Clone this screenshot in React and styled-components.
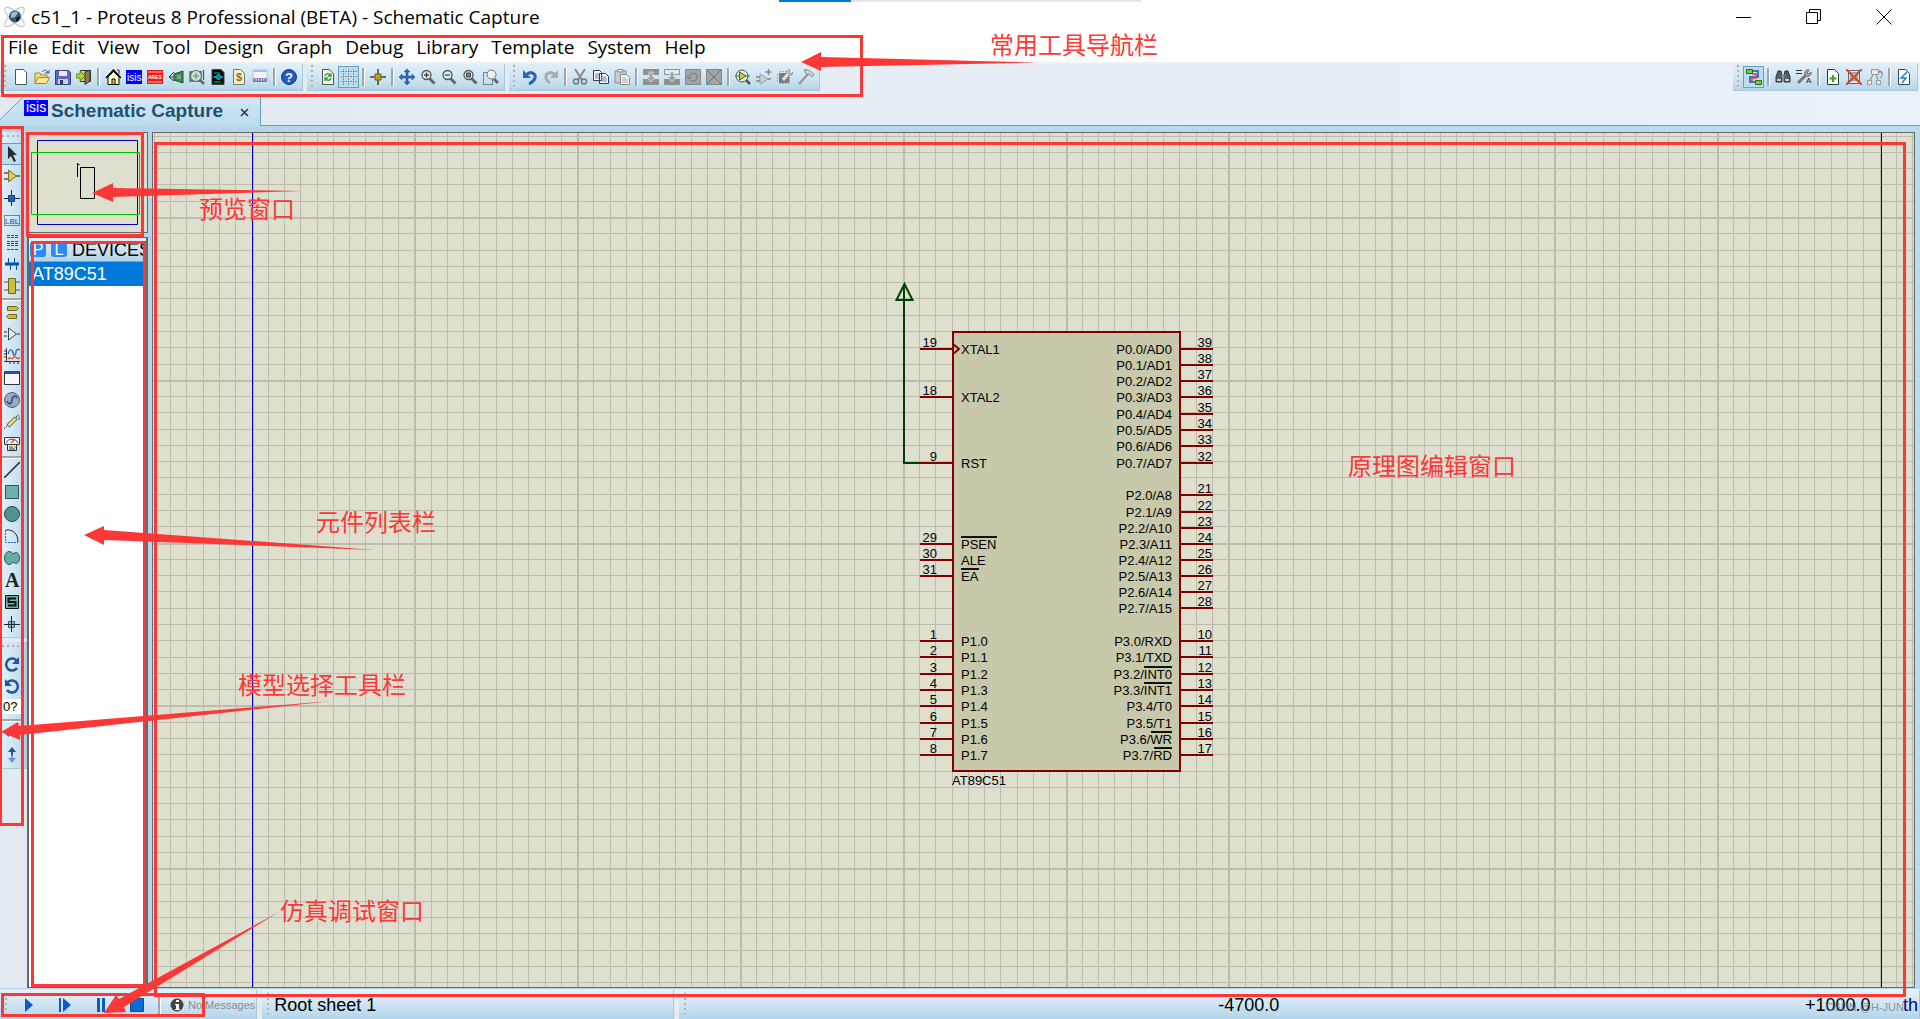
import { useState } from "react";
import styled, { createGlobalStyle } from "styled-components";

const GlobalStyle = createGlobalStyle`
  * {
    box-sizing: border-box;
  }
  body {
    margin: 0;
    background: #e2e9f0;
    font-family: "Liberation Sans", Arial, sans-serif;
    color: #000;
  }
  button {
    margin: 0;
    padding: 0;
    border: none;
    background: none;
    font: inherit;
    color: inherit;
  }
`;

const Window = styled.div`
  position: relative;
  display: flex;
  flex-direction: column;
  min-height: 100vh;
  overflow: hidden;
  background: linear-gradient(to right, #e2e9f0, #eaf1f9);
`;

/* title bar */

const TitleBar = styled.header`
  position: relative;
  display: flex;
  align-items: center;
  height: 35px;
  padding: 0 21px 2px 3px;
  background: #fff;
  h1 {
    flex: 1;
    margin: 0 0 0 5px;
    font: 400 19px/24px "Open Sans", "Noto Sans", sans-serif;
  }
`;

const Progress = styled.div`
  position: absolute;
  top: 0;
  left: 779px;
  width: 362px;
  height: 2px;
  background: linear-gradient(to right, #0078d7 72px, #e5e5e5 72px);
`;

const WindowButton = styled.button`
  display: flex;
  align-items: center;
  justify-content: center;
  width: 30px;
  height: 30px;
  margin-left: 40px;
`;

const MenuBar = styled.nav`
  display: flex;
  gap: 13px;
  height: 29px;
  padding: 0 8px 3px;
  background: #fff;
  border-bottom: 2px solid #f0f0f0;
  button {
    font: 400 19px/24px "Open Sans", "Noto Sans", sans-serif;
  }
`;

/* toolbars */

const ToolRow = styled.div`
  display: flex;
  gap: 4px;
  height: 27px;
  padding-right: 2px;
`;

const Toolbar = styled.div`
  display: flex;
  align-items: center;
  padding: 0 3px 1px 4px;
  margin-left: ${(props) => (props.$end ? "auto" : "0")};
  background: linear-gradient(#e0eff8, #cfe5f3 50%, #b9d8ea 90%, #a5c6da);
  border-right: 1px solid #a9c8da;
`;

const Grip = styled.span`
  flex: none;
  width: ${(props) => (props.$flat ? "100%" : "6px")};
  height: ${(props) => (props.$flat ? "11px" : "26px")};
  background-image: radial-gradient(circle at 2px 2px, #aab4bb 1px, #fff 2px, transparent 2px);
  background-size: ${(props) => (props.$flat ? "5px 11px" : "6px 5px")};
  background-position: ${(props) => (props.$flat ? "0 2px" : "-1px 0")};
`;

const Divider = styled.span`
  flex: none;
  width: ${(props) => (props.$flat ? "21px" : "2px")};
  height: ${(props) => (props.$flat ? "2px" : "18px")};
  margin: ${(props) => (props.$flat ? "1px 0" : "0 3px")};
  background: #a5a5a5;
  box-shadow: ${(props) => (props.$flat ? "0 1px #fff" : "1px 0 #fff")};
`;

const ToolButton = styled.button`
  flex: none;
  display: flex;
  align-items: center;
  justify-content: center;
  width: 21px;
  height: 22px;
  background: ${(props) => (props.$active ? "#bcdcf0" : "none")};
  box-shadow: ${(props) => (props.$active ? "inset 0 0 0 1px #6a9fbb" : "none")};
`;

/* tab strip */

const TabStrip = styled.div`
  display: flex;
  height: 35px;
  padding-top: 6px;
  border-bottom: 1px solid #6a9fbb;
`;

const Tab = styled.div`
  display: flex;
  height: 29px;
  margin-bottom: -1px;
  background: linear-gradient(#d2e7f5, #bbdcee);
  border-right: 1px solid #6a9fbb;
  color: #24506f;
  font: 700 19px/25px "Liberation Sans", Arial, sans-serif;
  svg {
    flex: none;
  }
  span {
    margin: 1px 15px 0 3px;
  }
  .logo {
    margin-top: 3px;
  }
  .close {
    display: flex;
    align-items: center;
    margin-right: 9px;
    padding: 1px 2px 0;
  }
`;

/* work area */

const Work = styled.main`
  flex: 1;
  display: flex;
  min-height: 600px;
  padding: 6px 5px 1px 0;
  background: linear-gradient(to right, #b5d4e8, #bbdcee);
`;

const Rail = styled.aside`
  flex: none;
  width: 27px;
  padding-left: 1px;
  background: #e2e9f0;
`;

const RailGroup = styled.div`
  display: flex;
  flex-direction: column;
  padding: 0 2px 2px 0;
  margin-bottom: 4px;
  background: linear-gradient(to right, #e2f1fa, #c6e0f0 70%, #a9cbe0);
  border-bottom: 1px solid #a9c8da;
`;

const AngleInput = styled.input`
  width: 23px;
  height: 15px;
  margin: 2px 0 4px;
  padding: 0 0 0 2px;
  border: none;
  font: 400 13px/15px "Liberation Sans", Arial, sans-serif;
`;

const Side = styled.section`
  flex: none;
  display: flex;
  flex-direction: column;
  gap: 4px;
  width: 121px;
  margin-right: 4px;
`;

const Preview = styled.div`
  height: 101px;
  background: #dedfcf;
  border: 1px solid #66696b;
  svg {
    display: block;
  }
`;

const Devices = styled.div`
  flex: 1;
  display: flex;
  flex-direction: column;
  overflow: hidden;
  background: #fff;
  border: 1px solid #66696b;
  border-width: 1px 2px 1px 2px;
`;

const DevicesHead = styled.div`
  display: flex;
  align-items: center;
  height: 24px;
  padding-left: 1px;
  border-bottom: 1px solid #8aa5b5;
  background: linear-gradient(#e2f1fa, #b5d4e8);
  font-size: 18px;
  h2 {
    margin: 2px 0 0;
    font: inherit;
  }
`;

const PickButton = styled.button`
  flex: none;
  width: 16px;
  height: 15px;
  margin-right: 5px;
  border-radius: 3px;
  background: #2a8cf0;
  color: #fff;
  font-size: 16px;
  line-height: 14px;
`;

const DeviceItem = styled.button`
  height: 24px;
  padding-left: 3px;
  background: ${(props) => (props.$selected ? "#0078d7" : "#fff")};
  color: ${(props) => (props.$selected ? "#fff" : "#000")};
  font-size: 18px;
  line-height: 24px;
  text-align: left;
`;

const Sheet = styled.div`
  flex: 1;
  position: relative;
  overflow: hidden;
  background: #dedfcf;
  border: 1px solid #66696b;
  > svg {
    position: absolute;
    top: 0;
    left: 0;
    width: 100%;
    height: 100%;
  }
  text {
    font: 400 13px "Liberation Sans", Arial, sans-serif;
  }
`;

/* status bar */

const StatusBar = styled.footer`
  display: flex;
  gap: 5px;
  height: 30px;
  padding-top: 1px;
`;

const StatusPart = styled.div`
  flex: ${(props) => props.$flex || "none"};
  display: flex;
  align-items: center;
  min-width: 0;
  padding: 0 0 0 5px;
  background: linear-gradient(#e6f2f9, #cfe5f3 50%, #b0d5ea);
  border-right: 1px solid #a9c8da;
  font-size: 18px;
  small {
    margin: 0 1px 0 3px;
    color: #858b90;
    font-size: 11px;
  }
`;

const SheetName = styled.span`
  width: 400px;
  padding: 2px 0 0 1px;
`;

const SimButton = styled.button`
  display: flex;
  align-items: center;
  justify-content: center;
  width: 36px;
  height: 26px;
`;

const InfoButton = styled(SimButton)`
  width: 16px;
  margin-left: 6px;
`;

const Coords = styled.div`
  flex: 1;
  display: grid;
  grid-template-columns: 9fr 10fr 98px 16px;
  padding-top: 2px;
  b {
    font-weight: 400;
    color: #000080;
  }
`;

const Watermark = styled.span`
  position: absolute;
  right: 16px;
  bottom: 6px;
  color: rgba(110, 120, 128, 0.75);
  font-size: 11px;
`;

/* red notes lying over the window */

const Frame = styled.div`
  position: absolute;
  left: ${(props) => props.$x}px;
  top: ${(props) => props.$y}px;
  width: ${(props) => props.$w}px;
  height: ${(props) => props.$h}px;
  border: 3px solid #fc3836;
  pointer-events: none;
`;

const SheetFrame = styled.div`
  position: absolute;
  inset: 142px 14px 22px 154px;
  border: 3px solid #fc3836;
  pointer-events: none;
`;

const Note = styled.span`
  position: absolute;
  left: ${(props) => props.$x}px;
  top: ${(props) => props.$y}px;
  color: #fc3836;
  font: 400 24px/26px "Noto Sans CJK SC", sans-serif;
  white-space: nowrap;
`;

const Arrows = styled.svg`
  position: absolute;
  top: 0;
  left: 0;
  pointer-events: none;
`;

const sheetShape = "M2.5 .5h7l4 4v11h-11z";

const lens = (inside) => (
  <>
    <path d="M9.5 9.5l5 5" stroke="#666" strokeWidth="3" />
    <circle cx="6.5" cy="6" r="4.5" fill="#dfe9ee" stroke="#555" strokeWidth="1.3" />
    {inside}
  </>
);

const icons = {
  new: <path d="M2.5 .5h8l3 3v12h-11z" fill="#fff" stroke="#555" />,
  open: (
    <>
      <path d="M1 14V4h5l1 2h6v3" fill="#f4dc7a" stroke="#a8862a" />
      <path d="M1 14.500l3-6h11.500l-3 6z" fill="#fbe88e" stroke="#a8862a" />
      <path d="M8 3c2-2.500 5-2.500 6 1m-3 0h4V1" fill="none" stroke="#3a5a78" />
    </>
  ),
  save: (
    <>
      <path d="M.5 1.500h13l2 2v12H.5z" fill="#6668b4" stroke="#3c3d88" />
      <path d="M4 2h8v5H4z" fill="#e9e9f6" />
      <path d="M3 10h10v5H3z" fill="#c3cfe3" />
      <path d="M5 11h3v4H5z" fill="#333a70" />
    </>
  ),
  exit: (
    <>
      <path d="M4.500 1.500h10v11h-10z" fill="#cfc8a0" stroke="#333" />
      <path d="M9 3l5-2v11l-5 3.500z" fill="#8c7d4a" stroke="#333" />
      <path d="M0 5h4V2l5 5-5 5V9H0z" fill="#b6d530" stroke="#55701a" strokeWidth=".8" />
    </>
  ),
  home: (
    <>
      <path d="M3 8v7.500h11V8L8.500 2.500z" fill="#ffffc8" stroke="#000" />
      <path d="M1 9l7.500-8L16 9" fill="none" stroke="#000" strokeWidth="1.500" />
      <path d="M12 1h2v4" stroke="#900" fill="none" />
      <path d="M7 15v-5h3v5" fill="#f2d038" stroke="#000" />
    </>
  ),
  isis: (
    <>
      <path d="M0 1h16v14H0z" fill="#00f" />
      <text x="1" y="12" fontSize="10" fill="#fff">isis</text>
    </>
  ),
  ares: (
    <>
      <path d="M0 1h16v14H0z" fill="#f01818" />
      <path d="M1 3h14M1 13h14" stroke="#fff" strokeWidth=".7" />
      <text x="1" y="10" fontSize="5" fontWeight="700" fill="#fff">ARES</text>
    </>
  ),
  view3d: (
    <>
      <path d="M6 5l9-3v12l-9-3z" fill="#3f8a55" stroke="#17532d" />
      <path d="M9 6h4v4H9z" fill="#8a9a8f" />
      <path d="M6 3L1 8l5 4M1 8h5" fill="none" stroke="#333" />
    </>
  ),
  gerber: (
    <>
      <path d="M1 3h10v9H1zM14.500 1v10M12 2v3" fill="none" stroke="#1f7c45" strokeWidth="1.300" />
      <circle cx="7" cy="7" r="5.500" fill="#cfe0d4" stroke="#666" strokeWidth="1.200" />
      <path d="M4 7h6M7 4v6" stroke="#4f8f68" />
      <path d="M11 11l4 4" stroke="#666" strokeWidth="2.500" />
    </>
  ),
  explorer: (
    <>
      <path d="M2 .5h9l3 3v12H2z" fill="#000" stroke="#444" />
      <path d="M4 4h6M4 13h7" stroke="#00d26a" />
      <path d="M8.500 5l3 3-3 3-3-3zM3 8h3M11 8h2" fill="#007a8c" stroke="#00e5ff" />
    </>
  ),
  bom: (
    <>
      <path d={sheetShape} fill="#f1eed8" stroke="#777" />
      <text x="5" y="12" fontSize="11" fontWeight="700" fill="#8a7416">$</text>
    </>
  ),
  source: (
    <>
      <path d="M1 1h14v11H1z" fill="#f2f5fa" stroke="#b6c2cf" />
      <path d="M1 1h14v2H1z" fill="#a7bfd9" />
      <text x="1" y="13" fontSize="5" fontWeight="700" fill="#26379a">01010</text>
    </>
  ),
  help: (
    <>
      <circle cx="8" cy="8" r="7.500" fill="#2459bd" stroke="#173b82" />
      <text x="4" y="13" fontSize="13" fontWeight="700" fill="#fff">?</text>
    </>
  ),
  refresh: (
    <>
      <path d={sheetShape} fill="#eef5ea" stroke="#555" />
      <path d="M5 7c1-3 4-3 5-1m1-2v3H8M11 9c-1 3-4 3-5 1m-1 2V9h3" fill="none" stroke="#2a9a2a" strokeWidth="1.300" />
    </>
  ),
  grid: (
    <path
      d="M0 2.500h16M0 7.500h16M0 12.500h16M2.500 0v16M7.500 0v16M12.500 0v16"
      stroke="#3b4650"
      strokeDasharray="1 1.500"
      strokeDashoffset=".5"
    />
  ),
  origin: (
    <>
      <path d="M8 0v16M0 8h16" stroke="#444" strokeWidth="1.500" />
      <path d="M5 5h6v6H5z" fill="#b9a61c" stroke="#6a5f10" />
    </>
  ),
  pan: <path d="M8 0l3 3H9v4h4V5l3 3-3 3V9H9v4h2l-3 3-3-3h2V9H3v2L0 8l3-3v2h4V3H5z" fill="#2e6bb8" stroke="#17437e" strokeWidth=".5" />,
  zoomIn: lens(<path d="M4 6h5M6.500 3.500v5" stroke="#444" strokeWidth="1.300" />),
  zoomOut: lens(<path d="M4 6h5" stroke="#3a6ca8" strokeWidth="1.500" />),
  zoomAll: lens(<path d="M4.500 4h4v4h-4z" fill="#6c8a6c" stroke="#444" />),
  zoomArea: (
    <>
      <path d="M.5 3.500h9v12h-9z" fill="none" stroke="#222" strokeDasharray="1 1" />
      <path d="M11 10l4 4" stroke="#666" strokeWidth="3" />
      <circle cx="8.500" cy="5.500" r="4.500" fill="#e9f1f6" stroke="#777" />
    </>
  ),
  undo: (
    <>
      <path d="M4 6c5-5 10-1 9 3-1 3-4 5-6 6" fill="none" stroke="#2668b8" strokeWidth="3" />
      <path d="M1 1v8h8z" fill="#2668b8" />
    </>
  ),
  redo: (
    <>
      <path d="M12 6C7 1 2 5 3 9c1 3 2 4 4 5" fill="none" stroke="#a5adb2" strokeWidth="3" />
      <path d="M15 1v8H7z" fill="#a5adb2" />
    </>
  ),
  cut: (
    <>
      <path d="M3 0l7 11M13 0L6 11" stroke="#8b8b8b" strokeWidth="2" />
      <circle cx="4" cy="12.500" r="2.500" fill="none" stroke="#777" strokeWidth="1.500" />
      <circle cx="12" cy="12.500" r="2.500" fill="none" stroke="#777" strokeWidth="1.500" />
    </>
  ),
  copy: (
    <>
      <path d="M.5 1.500h6l2 2v8h-8zM6.500 4.500h6l3 3v7h-9z" fill="#fff" stroke="#2f3f5c" />
      <path d="M2 5h4M2 7h4M2 9h4M8 8h5M8 10h6M8 12h6" stroke="#6b7c99" />
    </>
  ),
  paste: (
    <>
      <path d="M1 2h11v12H1z" fill="#c8cdd0" stroke="#8a8f92" />
      <path d="M4 .5h5V3H4z" fill="#eee" stroke="#888" />
      <path d="M6.500 5.500h6l3 3v7h-9z" fill="#f4f4f4" stroke="#888" />
      <path d="M8 9h4M8 11h6M8 13h6" stroke="#aaa" />
    </>
  ),
  blockCopy: (
    <>
      <path d="M0 0h16v6H0zM0 10h16v6H0z" fill="#919191" />
      <path d="M6 3h4v5h3l-5 5-5-5h3z" fill="#a5a5a5" stroke="#eee" strokeWidth=".7" />
    </>
  ),
  blockMove: (
    <>
      <path d="M.5 .5h15v5H.5z" fill="#e3edf2" stroke="#919191" />
      <path d="M0 10h16v6H0z" fill="#919191" />
      <path d="M6 3h4v5h3l-5 5-5-5h3z" fill="#a2a2a2" stroke="#eee" strokeWidth=".7" />
    </>
  ),
  blockRotate: (
    <>
      <path d="M.5 .5h15v15H.5z" fill="#a2a4a5" stroke="#888" />
      <path d="M4 8c1-5 8-5 8 0s-6 5-7 3M2 7l2 3 3-2" fill="none" stroke="#777" />
    </>
  ),
  blockDelete: (
    <>
      <path d="M.5 .5h15v15H.5z" fill="#a2a4a5" stroke="#888" />
      <path d="M1 1l14 14M15 1L1 15" stroke="#6f6f6f" />
    </>
  ),
  pick: (
    <>
      <path d="M10 10l5 5" stroke="#555" strokeWidth="2.500" />
      <circle cx="7" cy="7" r="6" fill="#e2ecd9" stroke="#555" />
      <path d="M4.500 3l6.500 4-6.500 4z" fill="#c9cb4a" stroke="#555" />
      <path d="M0 7h4M11 7h4" stroke="#285" />
    </>
  ),
  make: (
    <>
      <path d="M4 5l8 5-8 5z" fill="#d0d0d0" stroke="#999" />
      <path d="M0 8h4M0 12h4M12 10h3M12.500 0v6M9.500 3h6" stroke="#858585" strokeWidth="1.300" />
    </>
  ),
  packaging: (
    <>
      <path d="M2 4h10v10H2z" fill="#808080" />
      <path d="M3 2v14M6 2v14M9 2v14M12 8v8M0 6h14M0 9h14M0 12h14" stroke="#777" strokeDasharray="1 1" />
      <path d="M6 11l5-6" stroke="#e3e3e3" strokeWidth="3" />
      <path d="M10 5c-1-3 1-5 3-4l-1 3 2 1 2-2c0 3-3 4-5 3" fill="#d9d9d9" stroke="#777" strokeWidth=".7" />
    </>
  ),
  hammer: (
    <>
      <path d="M1 15L10 5" stroke="#999" strokeWidth="2.500" />
      <path d="M6 1c4-1 7 1 10 5l-2 2-3-3-2 1z" fill="#d2d2d2" stroke="#888" />
    </>
  ),
  autoroute: (
    <>
      <path d="M7 2h5v6H4v5h5" fill="none" stroke="#1f4fc0" strokeWidth="1.500" />
      <path d="M6 5h4v4H6v4" stroke="#dc4a26" strokeWidth="1.500" fill="none" />
      <path d="M.5 .5h6v4h-6zM9.500 11.500h6v4h-6z" fill="#6fce3c" stroke="#2a6a12" />
    </>
  ),
  search: (
    <>
      <path d="M3 2h3l1 5v6H1V8zM10 2h3l2 6v5H9V7z" fill="#555f68" stroke="#333" />
      <path d="M6.500 5h3v4h-3z" fill="#89939b" />
      <path d="M2 10h4v2H2zM10 10h4v2h-4z" fill="#c4cbd0" />
    </>
  ),
  property: (
    <>
      <path d="M0 1.500h6M0 4.500h6" stroke="#333" />
      <path d="M2 14l8-8" stroke="#777" strokeWidth="3" />
      <path d="M9 6c-1-3 1-6 4-5l-2 3 2 1 2-2c1 3-2 5-5 4" fill="#aaa" stroke="#555" strokeWidth=".8" />
      <text x="10" y="14" fontSize="8" fill="#111">A</text>
    </>
  ),
  newSheet: (
    <>
      <path d={sheetShape} fill="#fff" stroke="#333" />
      <path d="M8 6v7M4.500 9.500h7" stroke="#38a818" strokeWidth="2.200" />
    </>
  ),
  removeSheet: (
    <>
      <path d="M2.500 1.500h11v13h-11zM5 4h6v7H5z" fill="#e5e5e5" stroke="#666" />
      <path d="M0 0l16 16M16 0L0 16" stroke="#d9452b" strokeWidth="2" />
    </>
  ),
  goto: (
    <>
      <path d="M4.500 .5h7v5h-7zM.5 11.500h4v4h-4zM9.500 11.500h4v4h-4z" fill="#e9e9e9" stroke="#999" />
      <path d="M6 6l-3 5M9 6l2 5M12 2c4 1 4 6 1 7m-2-4l2-3 3 2" fill="none" stroke="#999" strokeWidth="1.300" />
    </>
  ),
  erc: (
    <>
      <path d={sheetShape} fill="#fff" stroke="#444" />
      <path d="M11 3L5 9h5l-4 5" fill="none" stroke="#1b86e0" strokeWidth="1.500" />
    </>
  ),
  select: <path d="M4 0v13l3-3 3 6 2-1-3-6h4z" fill="#2b2b2b" />,
  component: (
    <>
      <path d="M0 5h5M0 11h5M12 8h4" stroke="#555" strokeWidth="1.300" />
      <path d="M4.500 2l8 6-8 6z" fill="#d9cf5c" stroke="#7c7220" />
    </>
  ),
  junction: (
    <>
      <path d="M7.500 0v16M0 8.500h16" stroke="#222" />
      <path d="M4.500 5.500h6v6h-6z" fill="#1b62c4" stroke="#123f80" />
    </>
  ),
  label: (
    <>
      <path d="M.5 3.500h15v10H.5z" fill="none" stroke="#222" strokeDasharray="1 1" />
      <text x="1" y="12" fontSize="8" fill="#0a45a8">LBL</text>
    </>
  ),
  script: <path d="M3 1.500h11M3 3.500h11M3 7.500h11M3 9.500h11M3 11.500h11M3 15.500h11" stroke="#444" strokeDasharray="3 1" />,
  bus: (
    <>
      <path d="M1 8h14" stroke="#0c4fb0" strokeWidth="3" />
      <path d="M4.500 2v6M10.500 2v6M6.500 8v6M12.500 8v6" stroke="#0c4fb0" />
    </>
  ),
  subcircuit: (
    <>
      <path d="M0 4h4M0 12h4M12 4h4M12 12h4" stroke="#555" />
      <path d="M4.500 .5h7v15h-7z" fill="#cdbf36" stroke="#6f661c" />
    </>
  ),
  terminal: <path d="M3.500 2.500h9l2 2-2 2h-9zM12.500 10.500h-8l-2 2 2 2h8z" fill="#cdbf36" stroke="#6f661c" />,
  pin: (
    <>
      <path d="M4.500 2l8 6-8 6z" fill="#e3eef5" stroke="#444" />
      <path d="M0 6h3M0 10h3M13 8h3" stroke="#2a7f8c" strokeWidth="1.300" />
    </>
  ),
  graph: (
    <>
      <path d="M2.500 0v14M0 13.500h16M0 3h2M0 6h2M0 9h2M6 14v2M10 14v2M14 14v2" stroke="#333" />
      <path d="M4 6c2-6 4-5 5-1s3 2 3-1 2-3 4-2" fill="none" stroke="#1b5cc4" strokeWidth="1.200" />
      <path d="M4 11c2-3 4 1 5-1s3-1 4 0 2 1 3-1" fill="none" stroke="#dc4a26" strokeWidth="1.200" />
    </>
  ),
  tape: (
    <>
      <path d="M.5 1.500h15v13H.5z" fill="#f6f8fb" stroke="#333" />
      <path d="M1 1h14v3H1z" fill="#1b4fc0" />
    </>
  ),
  generator: (
    <>
      <circle cx="8" cy="8" r="7.500" fill="#a2a9b6" stroke="#585e69" />
      <path d="M3 9c2 5 5 2 5-1s3-6 5-2" fill="none" stroke="#1b4fb0" strokeWidth="1.700" />
    </>
  ),
  probe: (
    <>
      <path d="M0 15l4-4M12 4c1-5 4-2 3 2" fill="none" stroke="#333" strokeDasharray="2 1" />
      <path d="M4 12l8-8" stroke="#555" strokeWidth="4" />
      <path d="M4.500 11.500l7-7" stroke="#ebe07a" strokeWidth="2.500" />
    </>
  ),
  instrument: (
    <>
      <path d="M.5 1.500h15v7H.5zM3.500 8.500h9v6h-9z" fill="#f3f3f3" stroke="#333" />
      <path d="M2 7c2-5 10-5 12 0" fill="none" stroke="#1b4fb0" />
      <path d="M7 7l4-4" stroke="#dc4a26" strokeWidth="1.300" />
      <path d="M5 11h4M5 13h6" stroke="#333" />
      <path d="M10 10h2v2h-2z" fill="#d6c62c" />
    </>
  ),
  line: <path d="M0 16L16 0" stroke="#222" strokeWidth="1.500" />,
  box: <path d="M1.500 1.500h13v13h-13z" fill="#6db0aa" stroke="#2a5c5a" />,
  circle: <circle cx="8" cy="8" r="7.500" fill="#4f938e" stroke="#2a4a4a" />,
  arc: (
    <>
      <path d="M1.500 2v12.500H14" fill="none" stroke="#1b62c4" strokeDasharray="2 1" />
      <path d="M2 2c7-1 12 4 12 12" fill="none" stroke="#222" />
    </>
  ),
  path: <path d="M9 4C6-1 .5 2 .5 8S6 17 9 12c3 3 6.500 1 6.500-4S12 1 9 4z" fill="#67aaa3" stroke="#2a5c5a" />,
  text: <text x="1" y="15" fontSize="20" fontWeight="700" fontFamily="Liberation Serif" fill="#222">A</text>,
  symbol: (
    <>
      <path d="M1.500 1.500h13v13h-13z" fill="#6db0aa" stroke="#111" />
      <path d="M12 4.500H4.500v3.500h7v3.500H4" fill="none" stroke="#111" strokeWidth="2" />
    </>
  ),
  marker: (
    <>
      <path d="M4.500 5.500h6v6h-6z" fill="#8fc4bf" stroke="#2a5c5a" />
      <path d="M7.500 0v16M0 8.500h16" stroke="#222" />
    </>
  ),
  rotateCw: (
    <>
      <path d="M13 5a6 6 0 1 0 0 7" fill="none" stroke="#24529f" strokeWidth="2.500" />
      <path d="M15 1v7H8z" fill="#24529f" />
    </>
  ),
  rotateCcw: (
    <>
      <path d="M3 5a6 6 0 1 1 0 7" fill="none" stroke="#24529f" strokeWidth="2.500" />
      <path d="M1 1v7h7z" fill="#24529f" />
    </>
  ),
  flipX: (
    <>
      <path d="M8 7H5V4L0 8l5 4V9h3z" fill="#24529f" />
      <path d="M8 7h3V4l5 4-5 4V9H8z" fill="#6f90d6" />
    </>
  ),
  flipY: (
    <>
      <path d="M7 8V5H4l4-5 4 5H9v3z" fill="#24529f" />
      <path d="M7 8v3H4l4 5 4-5H9V8z" fill="#6f90d6" />
    </>
  ),
};

const Icon = ({ name }) => (
  <svg width="16" height="16" viewBox="0 0 16 16" aria-hidden="true">
    {icons[name]}
  </svg>
);

// "|" stands for a divider
const fileTools = ["new", "open", "save", "exit", "|", "home", "isis", "ares", "view3d", "gerber", "explorer", "bom", "source", "|", "help"];
const viewTools = ["refresh", "grid", "|", "origin", "|", "pan", "zoomIn", "zoomOut", "zoomAll", "zoomArea"];
const editTools = ["undo", "redo", "|", "cut", "copy", "paste", "|", "blockCopy", "blockMove", "blockRotate", "blockDelete", "|", "pick", "make", "packaging", "hammer"];
const designTools = ["autoroute", "|", "search", "property", "|", "newSheet", "removeSheet", "goto", "|", "erc"];
const modeTools = [
  "select", "component", "junction", "label", "script", "bus", "subcircuit", "|",
  "terminal", "pin", "graph", "tape", "generator", "probe", "instrument", "|",
  "line", "box", "circle", "arc", "path", "text", "symbol", "marker",
];
const menus = ["File", "Edit", "View", "Tool", "Design", "Graph", "Debug", "Library", "Template", "System", "Help"];

function Tools({ items, active, onPick, flat }) {
  return items.map((name, i) =>
    name === "|" ? (
      <Divider key={i} $flat={flat} />
    ) : (
      <ToolButton key={i} aria-label={name} $active={name === active} onClick={() => onPick && onPick(name)}>
        <Icon name={name} />
      </ToolButton>
    )
  );
}

// [number, name, y, width of the bar over the name]
const leftPins = [
  [19, "XTAL1", 216],
  [18, "XTAL2", 264],
  [9, "RST", 330],
  [29, "PSEN", 411, 36],
  [30, "ALE", 427],
  [31, "EA", 443, 18],
  [1, "P1.0", 508],
  [2, "P1.1", 524],
  [3, "P1.2", 541],
  [4, "P1.3", 557],
  [5, "P1.4", 573],
  [6, "P1.5", 590],
  [7, "P1.6", 606],
  [8, "P1.7", 622],
];
const rightPins = [
  [39, "P0.0/AD0", 216],
  [38, "P0.1/AD1", 232],
  [37, "P0.2/AD2", 248],
  [36, "P0.3/AD3", 264],
  [35, "P0.4/AD4", 281],
  [34, "P0.5/AD5", 297],
  [33, "P0.6/AD6", 313],
  [32, "P0.7/AD7", 330],
  [21, "P2.0/A8", 362],
  [22, "P2.1/A9", 379],
  [23, "P2.2/A10", 395],
  [24, "P2.3/A11", 411],
  [25, "P2.4/A12", 427],
  [26, "P2.5/A13", 443],
  [27, "P2.6/A14", 459],
  [28, "P2.7/A15", 475],
  [10, "P3.0/RXD", 508],
  [11, "P3.1/TXD", 524],
  [12, "P3.2/INT0", 541, 28],
  [13, "P3.3/INT1", 557, 28],
  [14, "P3.4/T0", 573],
  [15, "P3.5/T1", 590],
  [16, "P3.6/WR", 606, 21],
  [17, "P3.7/RD", 622, 18],
];

const PITCH = 16.28;
const steps = Array.from({ length: 240 }, (_, i) => i - 6);

function Schematic() {
  return (
    <svg role="img" aria-label="AT89C51 schematic">
      <g fill="#bcbcac" shapeRendering="crispEdges">
        {steps.map((n) => (
          <rect key={"v" + n} x={Math.round(98.5 + n * PITCH)} y="0" width={n % 10 ? 1 : 2} height="100%" />
        ))}
        {steps.map((n) => (
          <rect key={"h" + n} x="0" y={Math.round(84 + n * PITCH)} width="100%" height={n % 10 ? 1 : 2} />
        ))}
        <rect x="99" y="0" width="1" height="100%" fill="#0000c0" />
        <rect x="1728" y="0" width="1" height="100%" fill="#0000c0" />
      </g>
      <rect x="800" y="199" width="227" height="439" fill="#c8c8aa" stroke="#800000" strokeWidth="2" />
      <path d="M800 211l6 5-6 5" fill="none" stroke="#800000" strokeWidth="2" />
      <path d="M767 330h-16V151M743.500 167h16L751.500 151z" fill="none" stroke="#004000" strokeWidth="2" />
      {leftPins.map(([num, name, y, bar]) => (
        <g key={num}>
          <path d={`M767 ${y}h33`} stroke="#800000" strokeWidth="2" />
          <text x="784" y={y - 2} textAnchor="end">{num}</text>
          <text x="808" y={y + 5}>{name}</text>
          {bar && <path d={`M808 ${y - 7}h${bar}`} stroke="#111" strokeWidth="2" />}
        </g>
      ))}
      {rightPins.map(([num, name, y, bar]) => (
        <g key={num}>
          <path d={`M1027 ${y}h33`} stroke="#800000" strokeWidth="2" />
          <text x="1059" y={y - 2} textAnchor="end">{num}</text>
          <text x="1019" y={y + 5} textAnchor="end">{name}</text>
          {bar && <path d={`M1019 ${y - 7}h-${bar}`} stroke="#111" strokeWidth="2" />}
        </g>
      ))}
      <text x="799" y="652">AT89C51</text>
    </svg>
  );
}

export default function App() {
  const [mode, setMode] = useState("select");
  const [angle, setAngle] = useState("0?");

  return (
    <Window>
      <GlobalStyle />
      <TitleBar>
        <svg width="23" height="24" viewBox="0 0 23 24" aria-hidden="true">
          <g fill="none" stroke="#b9bdc0">
            <ellipse cx="11.500" cy="12" rx="13" ry="4.500" transform="rotate(45 11.500 12)" />
            <ellipse cx="11.500" cy="12" rx="13" ry="4.500" transform="rotate(-45 11.500 12)" />
          </g>
          <circle cx="12" cy="11.500" r="6" fill="#3d566f" />
          <path d="M8 9c2-3 6-3 7-1l-3 4-4 1z" fill="#9ebbd4" />
          <path d="M13 13l4-2c0 3-2 5-4 6z" fill="#111c28" />
        </svg>
        <h1>c51_1 - Proteus 8 Professional (BETA) - Schematic Capture</h1>
        <Progress />
        <WindowButton aria-label="Minimize">
          <svg width="16" height="16" stroke="#000"><path d="M0 8.500h15" /></svg>
        </WindowButton>
        <WindowButton aria-label="Restore">
          <svg width="16" height="16" stroke="#000" fill="none"><path d="M.5 3.500h11v11H.5zM3.500 3V.5h11v11H12" /></svg>
        </WindowButton>
        <WindowButton aria-label="Close">
          <svg width="16" height="16" stroke="#000"><path d="M.5 .5l15 15M15.500 .5l-15 15" /></svg>
        </WindowButton>
      </TitleBar>
      <MenuBar>
        {menus.map((item) => (
          <button key={item}>{item}</button>
        ))}
      </MenuBar>

      <ToolRow>
        <Toolbar>
          <Grip />
          <Tools items={fileTools} />
        </Toolbar>
        <Toolbar>
          <Grip />
          <Tools items={viewTools} active="grid" />
        </Toolbar>
        <Toolbar>
          <Grip />
          <Tools items={editTools} />
        </Toolbar>
        <Toolbar $end>
          <Grip />
          <Tools items={designTools} active="autoroute" />
        </Toolbar>
      </ToolRow>

      <TabStrip>
        <Tab>
          <svg width="24" height="28" aria-hidden="true">
            <path d="M0 0h24L0 23z" fill="#e2e9f0" />
            <path d="M0 22.500L23 .5" stroke="#6a9fbb" />
          </svg>
          <svg className="logo" width="24" height="16" aria-hidden="true">
            <path d="M0 0h24v16H0z" fill="#00f" />
            <text x="2" y="12" fontSize="14" fontWeight="400" fill="#fff">isis</text>
          </svg>
          <span>Schematic Capture</span>
          <button className="close" aria-label="Close tab">
            <svg width="9" height="9" stroke="#333" strokeWidth="1.500"><path d="M1 1l7 7M8 1L1 8" /></svg>
          </button>
        </Tab>
      </TabStrip>

      <Work>
        <Rail>
          <RailGroup>
            <Grip $flat />
            <Tools items={modeTools} active={mode} onPick={setMode} flat />
          </RailGroup>
          <RailGroup>
            <Grip $flat />
            <Tools items={["rotateCw", "rotateCcw"]} />
            <AngleInput aria-label="Rotation angle" value={angle} onChange={(e) => setAngle(e.target.value)} />
            <Tools items={["|", "flipX", "flipY"]} flat />
          </RailGroup>
        </Rail>
        <Side>
          <Preview>
            <svg width="118" height="99" fill="none" role="img" aria-label="Preview">
              <path d="M9.500 7.500h100v84h-100z" stroke="#0000c0" />
              <path d="M3.500 19.500h108v62h-108z" stroke="#00c000" />
              <path d="M52.500 34.500h14v31h-14zM49.500 30v14M49.500 31.500h2" stroke="#000" />
            </svg>
          </Preview>
          <Devices>
            <DevicesHead>
              <PickButton>P</PickButton>
              <PickButton>L</PickButton>
              <h2>DEVICES</h2>
            </DevicesHead>
            <DeviceItem $selected>AT89C51</DeviceItem>
          </Devices>
        </Side>
        <Sheet>
          <Schematic />
        </Sheet>
      </Work>

      <StatusBar>
        <StatusPart>
          <Grip />
          <SimButton aria-label="Play">
            <svg width="16" height="16"><path d="M4 1l8 7-8 7z" fill="#0c5cc0" /></svg>
          </SimButton>
          <SimButton aria-label="Step">
            <svg width="16" height="16"><path d="M2 1h2v14H2zM6 1l8 7-8 7z" fill="#0c5cc0" /></svg>
          </SimButton>
          <SimButton aria-label="Pause">
            <svg width="16" height="16"><path d="M4 1h3v14H4zM9 1h3v14H9z" fill="#0c5cc0" /></svg>
          </SimButton>
          <SimButton aria-label="Stop">
            <svg width="16" height="16"><path d="M1.500 1.500h13v13h-13z" fill="#0c6ad0" stroke="#0a4c9c" /></svg>
          </SimButton>
          <Divider />
          <InfoButton aria-label="Messages">
            <svg width="14" height="14">
              <circle cx="7" cy="7" r="6.500" fill="#444" />
              <path d="M6 2h3v2H6zM5 6h4v5h1v1H5v-1h1V7H5z" fill="#fff" />
            </svg>
          </InfoButton>
          <small>No Messages</small>
        </StatusPart>
        <StatusPart>
          <Grip />
          <SheetName>Root sheet 1</SheetName>
        </StatusPart>
        <StatusPart $flex="1">
          <Grip />
          <Coords>
            <span />
            <span>-4700.0</span>
            <span>+1000.0</span>
            <b>th</b>
          </Coords>
        </StatusPart>
      </StatusBar>
      <Watermark>CSDN @H-JUN</Watermark>

      <Frame $x={1} $y={35} $w={862} $h={62} />
      <Frame $x={-1} $y={126} $w={25} $h={700} />
      <Frame $x={26} $y={132} $w={118} $h={105} />
      <Frame $x={31} $y={241} $w={115} $h={746} />
      <Frame $x={1} $y={993} $w={204} $h={24} />
      <SheetFrame />
      <Arrows width="1100" height="1019" fill="#fc3836" aria-hidden="true">
        <path d="M801 62l20-10v5l216 5.500L821 67v4z" />
        <path d="M92 193l21-10v5l189 3-189 6v5z" />
        <path d="M84 535l20-9v4l271 20-271-10v5z" />
        <path d="M1 732l17-10 1 4 313-25L20 735v5z" />
        <path d="M104 1013l12-18 3 4 160-87-155 95 2 5z" />
      </Arrows>
      <Note $x={990} $y={31}>常用工具导航栏</Note>
      <Note $x={199} $y={195}>预览窗口</Note>
      <Note $x={316} $y={508}>元件列表栏</Note>
      <Note $x={238} $y={671}>模型选择工具栏</Note>
      <Note $x={1348} $y={452}>原理图编辑窗口</Note>
      <Note $x={280} $y={897}>仿真调试窗口</Note>
    </Window>
  );
}
